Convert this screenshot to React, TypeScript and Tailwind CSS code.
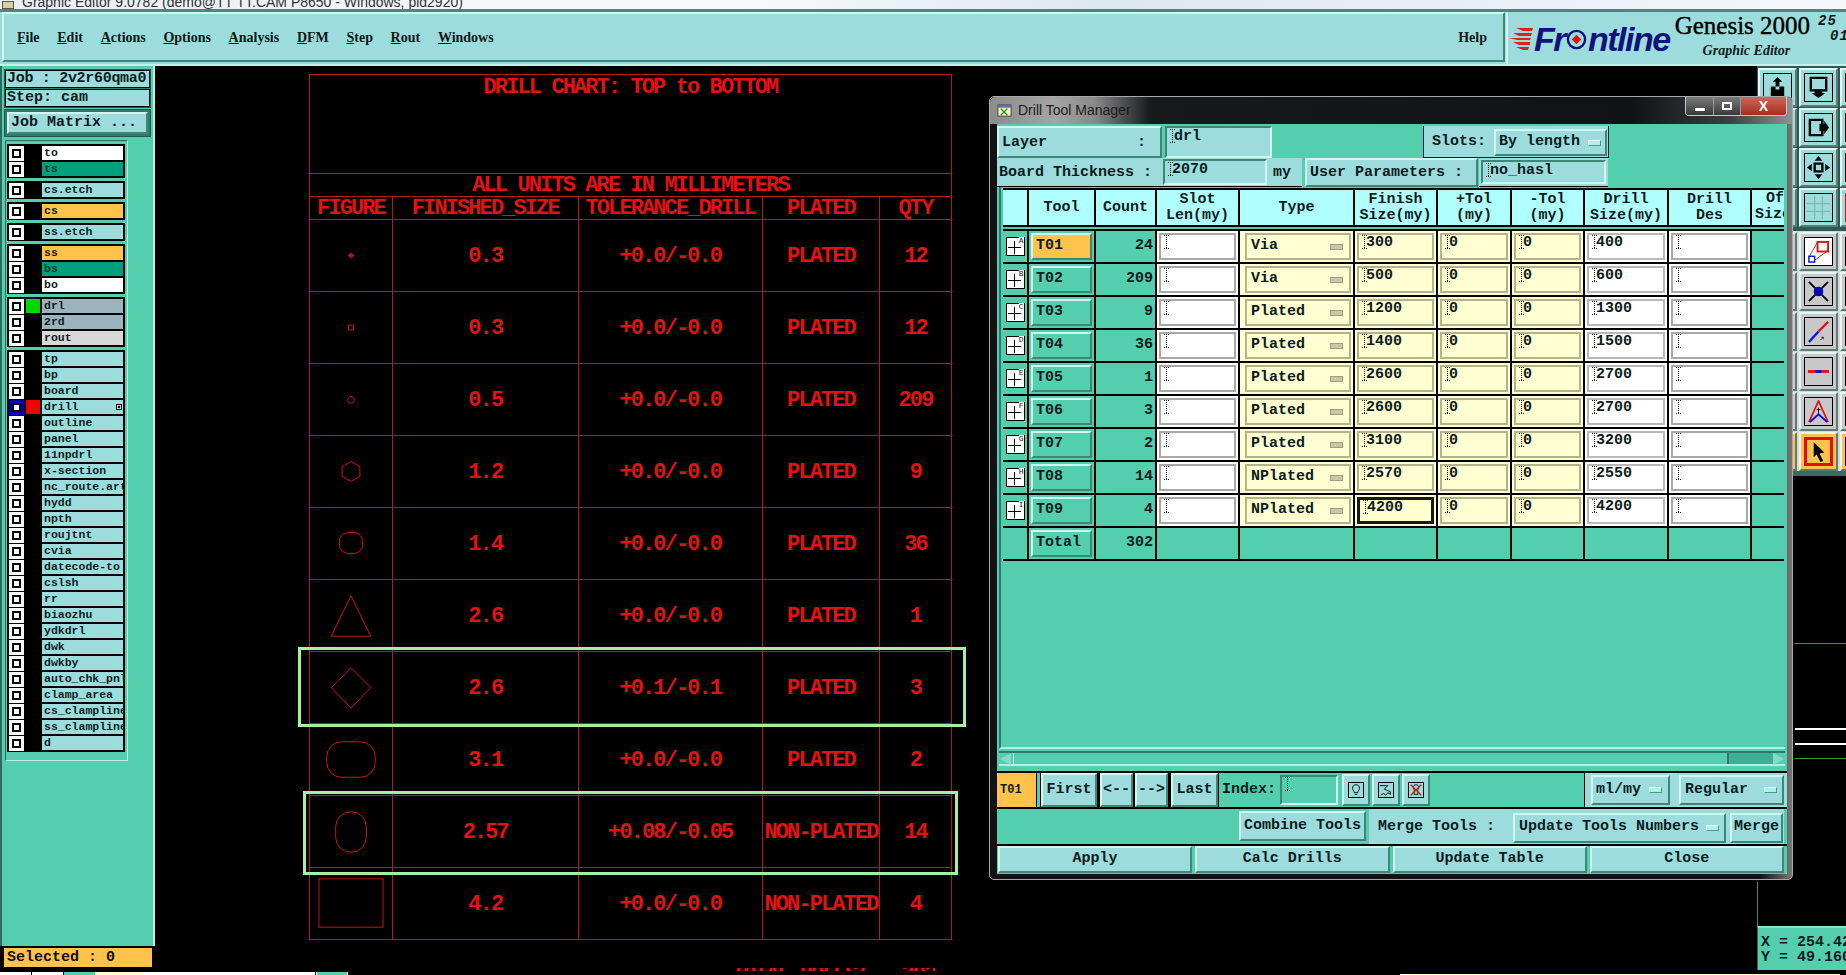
import type { ReactNode } from 'react'

const raised = 'border-2 border-t-[#d2f6f2] border-l-[#d2f6f2] border-b-[#3d8678] border-r-[#3d8678]'
const sunken = 'border-2 border-t-[#3d8678] border-l-[#3d8678] border-b-[#d2f6f2] border-r-[#d2f6f2]'

type Layer = { name: string; bg?: string; dot?: string; text?: string; active?: boolean }

const layerGroups: Layer[][] = [
  [{ name: 'to', bg: 'bg-white' }, { name: 'ts', bg: 'bg-[#00a07c]', text: 'text-[#033a2a]' }],
  [{ name: 'cs.etch' }],
  [{ name: 'cs', bg: 'bg-[#ffc24a]' }],
  [{ name: 'ss.etch' }],
  [
    { name: 'ss', bg: 'bg-[#ffc24a]' },
    { name: 'bs', bg: 'bg-[#00a07c]', text: 'text-[#033a2a]' },
    { name: 'bo', bg: 'bg-white' },
  ],
  [
    { name: 'drl', bg: 'bg-[#9ab4be]', dot: 'bg-[#00d800]' },
    { name: '2rd', bg: 'bg-[#9ab4be]' },
    { name: 'rout', bg: 'bg-[#d8d8d8]' },
  ],
  [
    { name: 'tp' },
    { name: 'bp' },
    { name: 'board' },
    { name: 'drill', dot: 'bg-[#f00000]', active: true },
    ...['outline', 'panel', '11npdrl', 'x-section', 'nc_route.art', 'hydd', 'npth', 'roujtnt', 'cvia', 'datecode-to', 'cslsh', 'rr', 'biaozhu', 'ydkdrl', 'dwk', 'dwkby', 'auto_chk_pnl', 'clamp_area', 'cs_clampline', 'ss_clampline', 'd'].map((name) => ({ name })),
  ],
]

const chartRows = [
  { size: '0.3', tol: '+0.0/-0.0', plated: 'PLATED', qty: '12', shape: <path d="M41.5 33v6M38.5 36h6M40 34.500h3v3h-3z" /> },
  { size: '0.3', tol: '+0.0/-0.0', plated: 'PLATED', qty: '12', shape: <rect x="39" y="33.500" width="5" height="5" /> },
  { size: '0.5', tol: '+0.0/-0.0', plated: 'PLATED', qty: '209', shape: <path d="M41.500 32.500l2.500 1.500 1 3-2 2.500h-3l-2-2.500 1-3z" /> },
  { size: '1.2', tol: '+0.0/-0.0', plated: 'PLATED', qty: '9', shape: <path d="M41.500 26l9 5v10l-9 5-9-5V31z" /> },
  { size: '1.4', tol: '+0.0/-0.0', plated: 'PLATED', qty: '36', shape: <path d="M37 25h9l4 2 3 4v9l-3 4-4 2h-9l-4-2-3-4v-9l3-4z" /> },
  { size: '2.6', tol: '+0.0/-0.0', plated: 'PLATED', qty: '1', shape: <path d="M41.500 16l20 41h-40z" /> },
  { size: '2.6', tol: '+0.1/-0.1', plated: 'PLATED', qty: '3', shape: <path d="M41.500 16l20 20-20 21-20-21z" /> },
  { size: '3.1', tol: '+0.0/-0.0', plated: 'PLATED', qty: '2', shape: <rect x="17" y="18" width="49" height="36" rx="15" /> },
  { size: '2.57', tol: '+0.08/-0.05', plated: 'NON-PLATED', qty: '14', shape: <rect x="26" y="16" width="31" height="41" rx="15" /> },
  { size: '4.2', tol: '+0.0/-0.0', plated: 'NON-PLATED', qty: '4', shape: <rect x="9" y="11" width="65" height="49" /> },
]

const tools = [
  ['T01', '24', 'Via', '300', '400', 'A'],
  ['T02', '209', 'Via', '500', '600', 'B'],
  ['T03', '9', 'Plated', '1200', '1300', 'C'],
  ['T04', '36', 'Plated', '1400', '1500', 'D'],
  ['T05', '1', 'Plated', '2600', '2700', 'E'],
  ['T06', '3', 'Plated', '2600', '2700', 'F'],
  ['T07', '2', 'Plated', '3100', '3200', 'G'],
  ['T08', '14', 'NPlated', '2570', '2550', 'H'],
  ['T09', '4', 'NPlated', '4200', '4200', 'I'],
]

const tableCols = 'grid-cols-[26px_67px_61px_83px_115px_83px_74px_73px_84px_83px_32px]'

function Caret() {
  return (
    <svg viewBox="0 0 5 14" className="w-[5px] h-[14px] shrink-0" fill="none" stroke="#222" strokeWidth="1" strokeDasharray="1 1">
      <path d="M0 .5h5M2.500 0v14M0 13.500h5" />
    </svg>
  )
}

function Pill() {
  return <span className="block w-[13px] h-[6px] shrink-0 bg-[#b6ecea] border border-t-[#e8fbfa] border-l-[#e8fbfa] border-b-[#4c9a8c] border-r-[#4c9a8c]" />
}

function Btn({ children, className = '' }: { children: ReactNode; className?: string }) {
  return <div className={`${raised} bg-[#9ddcdc] flex items-center justify-center whitespace-nowrap overflow-hidden ${className}`}>{children}</div>
}

function Drop({ label, className = '' }: { label: string; className?: string }) {
  return (
    <div className={`${raised} flex items-center justify-between whitespace-nowrap ${className}`}>
      <span>{label}</span>
      <Pill />
    </div>
  )
}

function Field({ value, className = '' }: { value: string; className?: string }) {
  return (
    <div className={`flex items-start pl-[3px] leading-[16px] overflow-hidden ${className}`}>
      <Caret />
      <span className="-ml-[1px]">{value}</span>
    </div>
  )
}

function LayerRow({ layer }: { layer: Layer }) {
  return (
    <div className="flex items-center h-[16px]">
      <span className={`w-[15px] h-[15px] ml-px flex items-center justify-center border-[3px] ${layer.active ? 'border-[#0000a0]' : 'border-white'} bg-black`}>
        <span className="block w-[7px] h-[7px] bg-white border border-black" />
      </span>
      <span className={`w-[14px] h-[14px] ml-[2px] ${layer.dot ?? ''}`} />
      <span className={`relative ml-[2px] w-[81px] h-[14px] pl-[2px] text-[11.5px] leading-[14px] font-bold whitespace-nowrap ${layer.bg ?? 'bg-[#9ddcdc]'} ${layer.text ?? 'text-[#0c1c1c]'}`}>
        {layer.name}
        {layer.active && <span className="absolute right-[1px] top-[4px] w-[6px] h-[6px] border border-black bg-[linear-gradient(#000,#000)] bg-[length:2px_2px] bg-center bg-no-repeat" />}
      </span>
    </div>
  )
}

function LeftPanel() {
  return (
    <aside className="w-[155px] shrink-0 flex flex-col">
      <div className="flex-1 flex flex-col bg-[#54cfae] border-r-2 border-r-[#b8efe4] border-l-2 border-l-[#2e6a60]">
        <div className="h-[39px] mt-[3px] mx-[2px] flex flex-col border border-[#1d5a50] bg-[#2f7a6c] gap-px text-[15px] font-bold leading-[16px] text-[#0c1c1c]">
          <div className="h-[18px] px-px bg-[#9ddcdc] border border-black whitespace-nowrap overflow-hidden tracking-[-0.3px]">Job : 2v2r60qma0</div>
          <div className="h-[18px] px-px bg-[#9ddcdc] border border-black whitespace-nowrap">Step: cam</div>
        </div>
        <div className="mx-[2px] mt-[1px] h-[28px] p-[2px] border border-[#1d5a50] bg-[#2f7a6c]">
          <Btn className="h-full !justify-start pl-[2px] text-[15px] font-bold text-[#0c1c1c]">Job Matrix ...</Btn>
        </div>
        <div className="flex items-stretch">
          <div className="w-[123px] ml-[3px] mt-[3px] pt-[3px] pb-[8px] px-[1px] flex flex-col gap-[3px] border border-t-[#2e6a60] border-l-[#2e6a60] border-b-[#b8efe4] border-r-[#b8efe4] overflow-hidden">
            {layerGroups.map((group) => (
              <div key={group[0].name} className="bg-black py-px px-px w-[118px] overflow-hidden">
                {group.map((layer) => (
                  <LayerRow key={layer.name} layer={layer} />
                ))}
              </div>
            ))}
          </div>
        </div>
      </div>
      <div className="h-[21px] mt-[1px] ml-[3px] mr-[2px] bg-[#ffc24a] border border-black px-[3px] text-[15px] font-bold leading-[19px] text-[#101010]">
        Selected : 0
      </div>
      <div className="h-[7px]" />
    </aside>
  )
}

function TopBar() {
  const menus = ['File', 'Edit', 'Actions', 'Options', 'Analysis', 'DFM', 'Step', 'Rout', 'Windows']
  return (
    <header className="h-[57px] shrink-0 flex bg-[#9ddcdc] border-t-[3px] border-t-[#4f8580] border-b-[2px] border-b-[#c8f0ec] font-['Liberation_Serif',serif]">
      <nav className={`${raised} ml-[2px] w-[1503px] h-[50px] flex items-center pl-[13px] pr-[16px] gap-[17.700px] text-[14px] font-bold text-[#101818]`}>
        {menus.map((m) => (
          <span key={m}>
            <span className="underline">{m[0]}</span>
            {m.slice(1)}
          </span>
        ))}
        <span className="ml-auto">Help</span>
      </nav>
      <div className="relative flex-1 flex border-l-2 border-l-[#d2f6f2] ml-[1px] overflow-hidden">
        <div className="ml-[1px] mt-[12px] h-[30px] flex items-center font-['Liberation_Sans',sans-serif] italic font-bold text-[34px] tracking-[-1.5px] text-[#12127e]">
          <svg viewBox="0 0 24 24" className="w-[24px] h-[24px] mr-[1px]" fill="#e02020">
            <path d="M7 1h17l-1 3H14zM4 6h19l-1 3H10zM0 11h22l-1 2H8zM4 15h17v3H10zM7 20h13l-1 3H14z" />
          </svg>
          <span>Fr</span>
          <svg viewBox="0 0 22 22" className="w-[21px] h-[21px] mx-[1px]">
            <circle cx="11" cy="11" r="9" fill="none" stroke="#12127e" strokeWidth="2.500" />
            <path d="M11 6l5 5-5 5-5-5z" fill="#e01010" />
          </svg>
          <span>ntline</span>
        </div>
        <div className="ml-[5px] flex flex-col items-center text-black">
          <span className="text-[25px] leading-[27px] [-webkit-text-stroke:0.4px_#000] whitespace-nowrap">Genesis 2000</span>
          <span className="mt-[3px] pl-[8px] text-[14px] leading-[17px] font-bold italic text-[#102020] whitespace-nowrap">Graphic Editor</span>
        </div>
        <div className="ml-[8px] pt-[2px] font-['Liberation_Mono',monospace] italic font-bold text-[14px] leading-[15px] text-[#101818] tracking-[1px] whitespace-nowrap">
          <div>25 /</div>
          <div className="pl-[12px]">01</div>
        </div>
      </div>
    </header>
  )
}

function DrillChart() {
  const cell = 'flex items-center justify-center pt-[2px] border-r border-b border-[#b81818] whitespace-nowrap'
  return (
    <section className="absolute left-[309px] top-[74px] w-[643px] border-t border-l border-[#b81818] text-[#e41212] font-bold text-[22px] tracking-[-1.9px] leading-none">
      <div className="h-[99px] pt-[2px] text-center border-r border-b border-[#b81818]">DRILL CHART: TOP to BOTTOM</div>
      <div className="h-[23px] flex items-center justify-center pt-[2px] border-r border-b border-[#b81818]">ALL UNITS ARE IN MILLIMETERS</div>
      <div className="grid grid-cols-[83px_185.500px_184.500px_117px_72px] grid-rows-[23px]">
        {['FIGURE', 'FINISHED_SIZE', 'TOLERANCE_DRILL', 'PLATED', 'QTY'].map((h) => (
          <div key={h} className={cell}>{h}</div>
        ))}
      </div>
      {chartRows.map((r, i) => (
        <div key={i} className="grid grid-cols-[83px_185.500px_184.500px_117px_72px] grid-rows-[72px]">
          <div className="flex items-center justify-center border-r border-b border-[#b81818]">
            <svg viewBox="0 0 83 72" className="w-[83px] h-[71px]" fill="none" stroke="#d01414" strokeWidth="1">
              {r.shape}
            </svg>
          </div>
          <div className={cell}>{r.size}</div>
          <div className={cell}>{r.tol}</div>
          <div className={cell}>{r.plated}</div>
          <div className={cell}>{r.qty}</div>
        </div>
      ))}
    </section>
  )
}

function ToolRow({ row, index }: { row: string[]; index: number }) {
  const [tool, count, type, finish, drill, letter] = row
  const line = 'border-r-2 border-b-2 border-black'
  return (
    <>
      <div className={`${line} flex items-center justify-center`}>
        <span className="relative block w-[19px] h-[19px] bg-white border border-black">
          <svg viewBox="0 0 17 17" className="w-[17px] h-[17px]" stroke="#000" strokeWidth="1">
            <path d="M7.500 3v13M1 9.500h13" />
          </svg>
          <span className="absolute right-0 top-[-1px] bg-white text-[8px] leading-[8px] font-normal">{letter}</span>
        </span>
      </div>
      <div className={`${line} p-[2px]`}>
        <Btn className={`h-full !justify-start pl-[3px] ${index === 0 ? '!bg-[#ffc24a]' : '!bg-[#54cfae]'}`}>{tool}</Btn>
      </div>
      <div className={`${line} flex items-center justify-end pr-[2px]`}>{count}</div>
      <div className={`${line} bg-white p-[2px]`}>
        <Field value="" className="h-full border-2 border-[#a8a8a8]" />
      </div>
      <div className={`${line} bg-[#ffffd2] p-[2px] pl-[5px]`}>
        <div className="h-full flex items-center justify-between pl-[4px] pr-[6px] border-2 border-[#b4b48c]">
          <span>{type}</span>
          <span className="block w-[13px] h-[6px] bg-[#c8c8a8] border border-[#a0a080]" />
        </div>
      </div>
      <div className={`${line} bg-[#ffffd2] p-[2px]`}>
        <Field value={finish} className={`h-full ${tool === 'T09' ? 'border-[3px] border-[#181818]' : 'border-2 border-[#b4b48c]'}`} />
      </div>
      <div className={`${line} bg-[#ffffd2] p-[2px]`}>
        <Field value="0" className="h-full border-2 border-[#b4b48c]" />
      </div>
      <div className={`${line} bg-[#ffffd2] p-[2px]`}>
        <Field value="0" className="h-full border-2 border-[#b4b48c]" />
      </div>
      <div className={`${line} bg-white p-[2px]`}>
        <Field value={drill} className="h-full border-2 border-[#b8b8b8]" />
      </div>
      <div className={`${line} bg-white p-[2px]`}>
        <Field value="" className="h-full border-2 border-[#a8a8a8]" />
      </div>
      <div className="border-b-2 border-black" />
    </>
  )
}

function ToolTable() {
  const head = 'bg-[#b0ffff] border-r-2 border-black flex items-center justify-center text-center leading-[16px] whitespace-pre-line overflow-hidden'
  return (
    <div className="h-[562px] ml-[2px] mr-[2px] border-l-2 border-l-[#2e7a6c] border-b-2 border-b-[#b8efe4] pl-[2px]">
      <div className={`grid ${tableCols} grid-rows-[35px] w-[781px] mt-[1px] border-t-2 border-b-2 border-black`}>
        <div className={head} />
        <div className={head}>Tool</div>
        <div className={head}>Count</div>
        <div className={head}>{'Slot\nLen(my)'}</div>
        <div className={head}>Type</div>
        <div className={head}>{'Finish\nSize(my)'}</div>
        <div className={head}>{'+Tol\n(my)'}</div>
        <div className={head}>{'-Tol\n(my)'}</div>
        <div className={head}>{'Drill\nSize(my)'}</div>
        <div className={head}>{'Drill\nDes'}</div>
        <div className="bg-[#b0ffff] leading-[16px] overflow-hidden whitespace-nowrap pl-[3px] pt-px">
          <div className="pl-[11px]">Of</div>
          <div>Size</div>
        </div>
      </div>
      <div className={`grid ${tableCols} auto-rows-[33px] w-[781px] mt-[2px] border-t-2 border-black`}>
        {tools.map((row, i) => (
          <ToolRow key={row[0]} row={row} index={i} />
        ))}
        <div className="border-r-2 border-b-2 border-black" />
        <div className="border-r-2 border-b-2 border-black p-[2px]">
          <Btn className="h-full !justify-start pl-[3px] !bg-[#54cfae]">Total</Btn>
        </div>
        <div className="border-r-2 border-b-2 border-black flex items-center justify-end pr-[2px]">302</div>
        {[0, 1, 2, 3, 4, 5, 6].map((n) => (
          <div key={n} className="border-r-2 border-b-2 border-black" />
        ))}
        <div className="border-b-2 border-black" />
      </div>
    </div>
  )
}

function SmallIcon({ kind }: { kind: 'bulb' | 'map' | 'cross' }) {
  return (
    <div className={`${raised} w-[28px] h-[32px] bg-[#9ddcdc] flex items-center justify-center`}>
      <svg viewBox="0 0 16 16" className="w-[16px] h-[16px] border border-black" fill="none" stroke="#000" strokeWidth="1">
        {kind === 'bulb' && <path d="M8 2c3 0 4 2 4 4s-2 3-2 5H6c0-2-2-3-2-5s1-4 4-4zM6.500 13h3" />}
        {kind === 'map' && <path d="M1 3h9l-4 4 7 3v3l-3-2-2 3-3-2-3 2" />}
        {kind === 'cross' && (
          <>
            <path d="M8 2c2 0 3 1 3 3s-1 2-1 4v4H6V9c0-2-1-2-1-4s1-3 3-3z" />
            <path d="M2 2l12 12M14 2L2 14" stroke="#e01010" strokeWidth="1.500" />
          </>
        )}
      </svg>
    </div>
  )
}

function DrillToolManager() {
  return (
    <section className="absolute left-[989px] top-[96px] w-[804px] h-[784px] rounded-[5px] border border-[#a8a8a8] bg-[linear-gradient(90deg,#101216_0,#101216_96%,#777_100%)] flex flex-col pl-[7px] pr-[5px] pb-[6px]">
      <div className="relative h-[27px] shrink-0 -ml-[7px] -mr-[5px] flex items-center gap-[6px] pl-[7px] rounded-t-[5px] bg-[linear-gradient(90deg,#8c8c8c_0,#a4a4a4_8%,#8a8a8a_13%,#18191d_20%,#101216_80%,#3a3c40_92%,#8e9094_100%)] font-['Liberation_Sans',sans-serif] font-normal text-[14px] text-[#1c1c1c]">
        <svg viewBox="0 0 16 16" className="w-[15px] h-[15px]">
          <rect x="1" y="2" width="14" height="12" fill="#f6f0c0" stroke="#444" />
          <rect x="1" y="2" width="14" height="3" fill="#5c6cb0" />
          <path d="M4 6l7 7M11 6l-7 7" stroke="#2c8a2c" strokeWidth="1.500" />
        </svg>
        <span>Drill Tool Manager</span>
        <div className="absolute right-[5px] top-0 h-[19px] w-[102px] flex rounded-b-[4px] overflow-hidden border border-[#c8c8c8] border-t-0">
          <div className="w-[28px] flex items-end justify-center pb-[4px] bg-[linear-gradient(#7a7a7a,#3a3a3a)] border-r border-[#999]">
            <span className="block w-[10px] h-[3px] bg-white" />
          </div>
          <div className="w-[27px] flex items-center justify-center bg-[linear-gradient(#7a7a7a,#3a3a3a)] border-r border-[#999]">
            <span className="block w-[10px] h-[8px] border-2 border-white" />
          </div>
          <div className="flex-1 flex items-center justify-center bg-[linear-gradient(#c86a5c,#a82c1c)] text-white text-[14px] font-bold">X</div>
        </div>
      </div>
      <div className="flex-1 flex flex-col bg-[#54cfae] text-[15px] font-bold text-[#0c1c1c]">
        <div className="h-[34px] shrink-0 flex pt-[2px]">
          <Btn className="w-[165px] !justify-start pl-[3px] pt-[2px]">
            <span className="whitespace-pre">Layer          :</span>
          </Btn>
          <Field value="drl" className={`${sunken} ml-[3px] w-[107px] pt-[1px] bg-[#9ddcdc]`} />
          <div className="ml-[151px] w-[186px] flex items-center pl-[8px] pt-[2px] bg-[#9ddcdc] border-l border-r border-[#123] border-b">
            <span>Slots:</span>
            <Drop label="By length" className="ml-[8px] w-[113px] h-[27px] pl-[3px] pr-[4px]" />
          </div>
        </div>
        <div className="h-[29px] shrink-0 flex">
          <div className="w-[305px] flex items-center bg-[#9ddcdc] pl-[2px] pt-[2px] whitespace-nowrap border-b border-black">
            <span className="w-[165px]">Board Thickness :</span>
            <Field value="2070" className={`${sunken} w-[104px] h-[26px] -ml-[1px] -mt-[2px] pt-[1px] bg-[#9ddcdc]`} />
            <span className="ml-[6px]">my</span>
          </div>
          <Btn className="w-[173px] ml-[3px] !justify-start pl-[3px] pt-[1px]">User Parameters :</Btn>
          <div className="ml-[1px] w-[129px] p-[2px] bg-[#9ddcdc] border-b border-black">
            <Field value="no_hasl" className={`${sunken} h-full pt-[1px] bg-[#9ddcdc]`} />
          </div>
        </div>
        <ToolTable />
        <div className="h-[20px] shrink-0 pt-[2px] px-[2px]">
          <div className="h-[15px] flex items-center border-t-2 border-t-[#2e7a6c] border-b-2 border-b-[#b8efe4]">
            <span className="w-0 h-0 ml-[1px] border-y-[6px] border-y-transparent border-r-[11px] border-r-[#8ad8c8]" />
            <span className="h-full w-[716px] ml-[2px] bg-[#54cfae] border-r-2 border-r-[#2e7a6c] border-l border-l-[#d2f6f2]" />
            <span className="h-full flex-1 bg-[#3eae94]" />
            <span className="w-0 h-0 mr-[1px] border-y-[6px] border-y-transparent border-l-[11px] border-l-[#8ad8c8]" />
          </div>
        </div>
        <div className="h-[38px] shrink-0 mt-[2px] flex items-center border-y-2 border-black">
          <div className="w-[40px] h-full bg-[#ffc24a] flex items-center pl-[3px] text-[12px] border-r border-black">T01</div>
          <div className="h-full ml-[3px] flex items-stretch gap-x-[3px] bg-black border-x border-black">
            <Btn className="w-[56px]">First</Btn>
            <Btn className="w-[33px]">&lt;--</Btn>
            <Btn className="w-[33px] -ml-px">--&gt;</Btn>
            <Btn className="w-[47px]">Last</Btn>
          </div>
          <span className="ml-[3px] w-[58px]">Index:</span>
          <Field value="" className={`${sunken} w-[58px] h-[30px]`} />
          <div className="ml-[4px] flex gap-[2px]">
            <SmallIcon kind="bulb" />
            <SmallIcon kind="map" />
            <SmallIcon kind="cross" />
          </div>
          <div className="ml-auto h-full flex items-center bg-[#9ddcdc] pl-[6px] pr-[3px] border-l border-black">
            <Drop label="ml/my" className="w-[79px] h-[30px] pl-[3px] pr-[6px]" />
            <span className="w-[9px] h-full bg-black/0" />
            <Drop label="Regular" className="w-[105px] h-[30px] pl-[4px] pr-[5px]" />
          </div>
        </div>
        <div className="h-[37px] shrink-0 flex justify-end pr-[3px] bg-[#54cfae] border-b-2 border-black">
          <Btn className="w-[127px] h-[30px] mt-[2px]">Combine Tools</Btn>
          <div className="ml-[3px] w-[415px] flex items-center bg-[#9ddcdc] pl-[9px] pt-[2px]">
            <span className="w-[135px]">Merge Tools :</span>
            <Drop label="Update Tools Numbers" className="w-[213px] h-[30px] pl-[4px] pr-[5px]" />
            <Btn className="w-[53px] h-[30px] ml-[4px]">Merge</Btn>
          </div>
        </div>
        <div className="flex-1 flex gap-[3px] pl-px pr-[3px] pb-[1px]">
          <Btn className="flex-1">Apply</Btn>
          <Btn className="flex-1">Calc Drills</Btn>
          <Btn className="flex-1">Update Table</Btn>
          <Btn className="flex-1">Close</Btn>
        </div>
      </div>
    </section>
  )
}

const toolGlyphs: Record<string, ReactNode> = {
  up: <path d="M5 11h14v11H5zM12 1l5 5h-3v8h-4V6H7z" fill="#000" fillRule="evenodd" />,
  down: (
    <>
      <path d="M4 2h16v13H4z" fill="none" stroke="#000" strokeWidth="2.500" />
      <path d="M8 14h8v4h3l-7 5-7-5h3z" fill="#000" />
    </>
  ),
  right: (
    <>
      <path d="M3 4h13v16H3z" fill="none" stroke="#000" strokeWidth="2.500" />
      <path d="M13 8h5V5l5 7-5 7v-3h-5z" fill="#000" />
    </>
  ),
  move: (
    <>
      <path d="M8 8h8v8H8z" fill="none" stroke="#000" strokeWidth="2.500" />
      <path d="M12 0l4 5H8zM12 24l4-5H8zM0 12l5-4v8zM24 12l-5-4v8z" fill="#000" />
    </>
  ),
  grid: <path d="M8 0v24M16 0v24M0 8h24M0 16h24" stroke="#8ea6a6" strokeWidth="1" fill="none" />,
  shape: (
    <>
      <path d="M11 2L2 18M22 11L8 21" stroke="#000" strokeWidth=".7" fill="none" />
      <rect x="11" y="2" width="11" height="10" fill="none" stroke="#e01010" strokeWidth="2" />
      <rect x="2" y="17" width="6" height="6" fill="none" stroke="#1010e0" strokeWidth="1.500" />
    </>
  ),
  cross: (
    <>
      <path d="M2 2l20 20M22 2L2 22" stroke="#000" strokeWidth="2" />
      <circle cx="12" cy="12" r="5" fill="#0a0ab0" />
    </>
  ),
  slash: (
    <>
      <path d="M22 2L12 12" stroke="#e01010" strokeWidth="2.500" />
      <path d="M12 12L2 23" stroke="#1010e0" strokeWidth="2.500" />
      <path d="M14 21l3-3m-2 0h2v2" stroke="#000" strokeWidth=".8" fill="none" />
    </>
  ),
  dash: (
    <>
      <path d="M1 12h22" stroke="#e01010" strokeWidth="3" />
      <path d="M9 12h6" stroke="#1010e0" strokeWidth="3" />
    </>
  ),
  peak: (
    <>
      <path d="M2 23L12 1l10 22" fill="none" stroke="#e01010" strokeWidth="1.800" />
      <path d="M3 23l9-8 9 8" fill="none" stroke="#1010e0" strokeWidth="2" />
      <path d="M12 8v6M10 10h4" stroke="#000" strokeWidth="1" />
    </>
  ),
  arrow: <path d="M7 2l11 11-5 1 4 8-3 1-4-8-3 3z" fill="#000" />,
}

function ToolButton({ glyph, tone = 'bg-[#9ddcdc]', frame = 'border-black', inner = '' }: { glyph?: string; tone?: string; frame?: string; inner?: string }) {
  return (
    <div className={`w-[39px] h-[39px] p-[3px] ${tone} border-2 border-t-[#e6f6f4] border-l-[#e6f6f4] border-b-[#5c7a76] border-r-[#5c7a76]`}>
      <div className={`w-full h-full flex items-center justify-center border ${frame} ${inner}`}>
        {glyph && (
          <svg viewBox="0 0 24 24" className="w-[23px] h-[23px]">
            {toolGlyphs[glyph]}
          </svg>
        )}
      </div>
    </div>
  )
}

function RightToolbar() {
  const gray = 'bg-[#c8c8c8]'
  return (
    <aside className="absolute left-[1757px] top-[66px] w-[89px] flex flex-col bg-[#2e5a54] pt-[2px] pl-px">
      <div className="grid grid-cols-[39px_39px_39px] gap-x-[2px] gap-y-px overflow-hidden">
        <ToolButton glyph="up" />
        <ToolButton glyph="down" />
        <ToolButton />
        <ToolButton />
        <ToolButton glyph="right" />
        <ToolButton />
        <ToolButton />
        <ToolButton glyph="move" />
        <ToolButton />
        <ToolButton />
        <ToolButton glyph="grid" />
        <ToolButton frame="border-[#e01010] border-[3px]" />
      </div>
      <div className="mt-[3px] pt-px grid grid-cols-[39px_39px_39px] gap-x-[2px] gap-y-px bg-[#d8d8d8] overflow-hidden border-t border-[#2e5a54]">
        <ToolButton tone={gray} />
        <ToolButton tone={gray} glyph="shape" inner="bg-white" />
        <ToolButton tone={gray} inner="bg-white" />
        <ToolButton tone={gray} />
        <ToolButton tone={gray} glyph="cross" />
        <ToolButton tone={gray} />
        <ToolButton tone={gray} />
        <ToolButton tone={gray} glyph="slash" />
        <ToolButton tone={gray} />
        <ToolButton tone={gray} />
        <ToolButton tone={gray} glyph="dash" />
        <ToolButton tone={gray} />
        <ToolButton tone={gray} />
        <ToolButton tone={gray} glyph="peak" />
        <ToolButton tone={gray} />
        <ToolButton tone="bg-[#ffc24a]" />
        <ToolButton tone="bg-[#ffc24a]" glyph="arrow" frame="border-[3px] border-[#e01010]" />
        <ToolButton tone="bg-[#ffc24a]" />
      </div>
      <div className="h-[5px] bg-[#3a6a64]" />
    </aside>
  )
}

export default function App() {
  return (
    <div className="relative w-[1846px] h-[975px] overflow-hidden bg-black flex flex-col font-['Liberation_Mono',monospace]">
      <div className="h-[9px] shrink-0 bg-[linear-gradient(90deg,#e8f0f6,#f6fafc_40%,#dce8f0_60%,#f4f8fb)] overflow-hidden flex items-end pl-[2px] gap-[8px] font-['Liberation_Sans',sans-serif] text-[14px] leading-[14px] text-[#333]">
        <span className="block w-[12px] h-[8px] shrink-0 bg-[#d8d098] border border-[#555]" />
        <span className="whitespace-nowrap">Graphic Editor 9.0782 (demo@TT TT.CAM P8650 - Windows, pid2920)</span>
      </div>
      <TopBar />
      <div className="flex-1 flex">
        <LeftPanel />
      </div>

      <DrillChart />
      <div className="absolute left-[298px] top-[647px] w-[668px] h-[80px] border-[3px] border-[#a4f0a0]" />
      <div className="absolute left-[303px] top-[791px] w-[655px] h-[84px] border-[3px] border-[#a4f0a0]" />
      <div className="absolute left-[732px] top-[968px] h-[3px] overflow-hidden">
        <div className="-mt-[4px] font-bold text-[22px] tracking-[-1.9px] leading-none text-[#e41212] whitespace-pre">TOTAL HOLES:   302</div>
      </div>

      <RightToolbar />
      <div className="absolute left-[1795px] right-0 top-[643px] h-px bg-[#2c9a2c]" />
      <div className="absolute left-[1795px] right-0 top-[728px] h-[2px] bg-white" />
      <div className="absolute left-[1795px] right-0 top-[743px] h-[2px] bg-white" />
      <div className="absolute left-[1795px] right-0 top-[758px] h-px bg-[#2c9a2c]" />
      <div className="absolute left-[1757px] top-[882px] w-px h-[44px] bg-[#3e8a7c]" />

      <DrillToolManager />

      <div className="absolute left-[1757px] top-[926px] right-0 h-[44px] bg-[#54cfae] border-t-2 border-t-[#8ee0cc] border-l border-l-[#2e6a60] pl-[3px] pt-[7px] text-[15px] font-bold leading-[15px] text-[#0c1c1c] whitespace-nowrap overflow-hidden">
        <div>X = 254.427</div>
        <div>Y = 49.160</div>
      </div>
      <div className="absolute left-0 top-[972px] h-[3px] w-[348px] flex bg-white">
        <span className="w-[32px] border-r border-black" />
        <span className="w-[32px] border-r border-black" />
        <span className="w-[31px] bg-[#54cfae]" />
        <span className="w-[48px] bg-[#ffffd2]" />
        <span className="flex-1 border-r border-black" />
        <span className="w-[32px] bg-[#54cfae] border-x border-white" />
      </div>
      <div className="absolute left-[1400px] top-[974px] w-[440px] h-px bg-[#ffffd2]" />
    </div>
  )
}
